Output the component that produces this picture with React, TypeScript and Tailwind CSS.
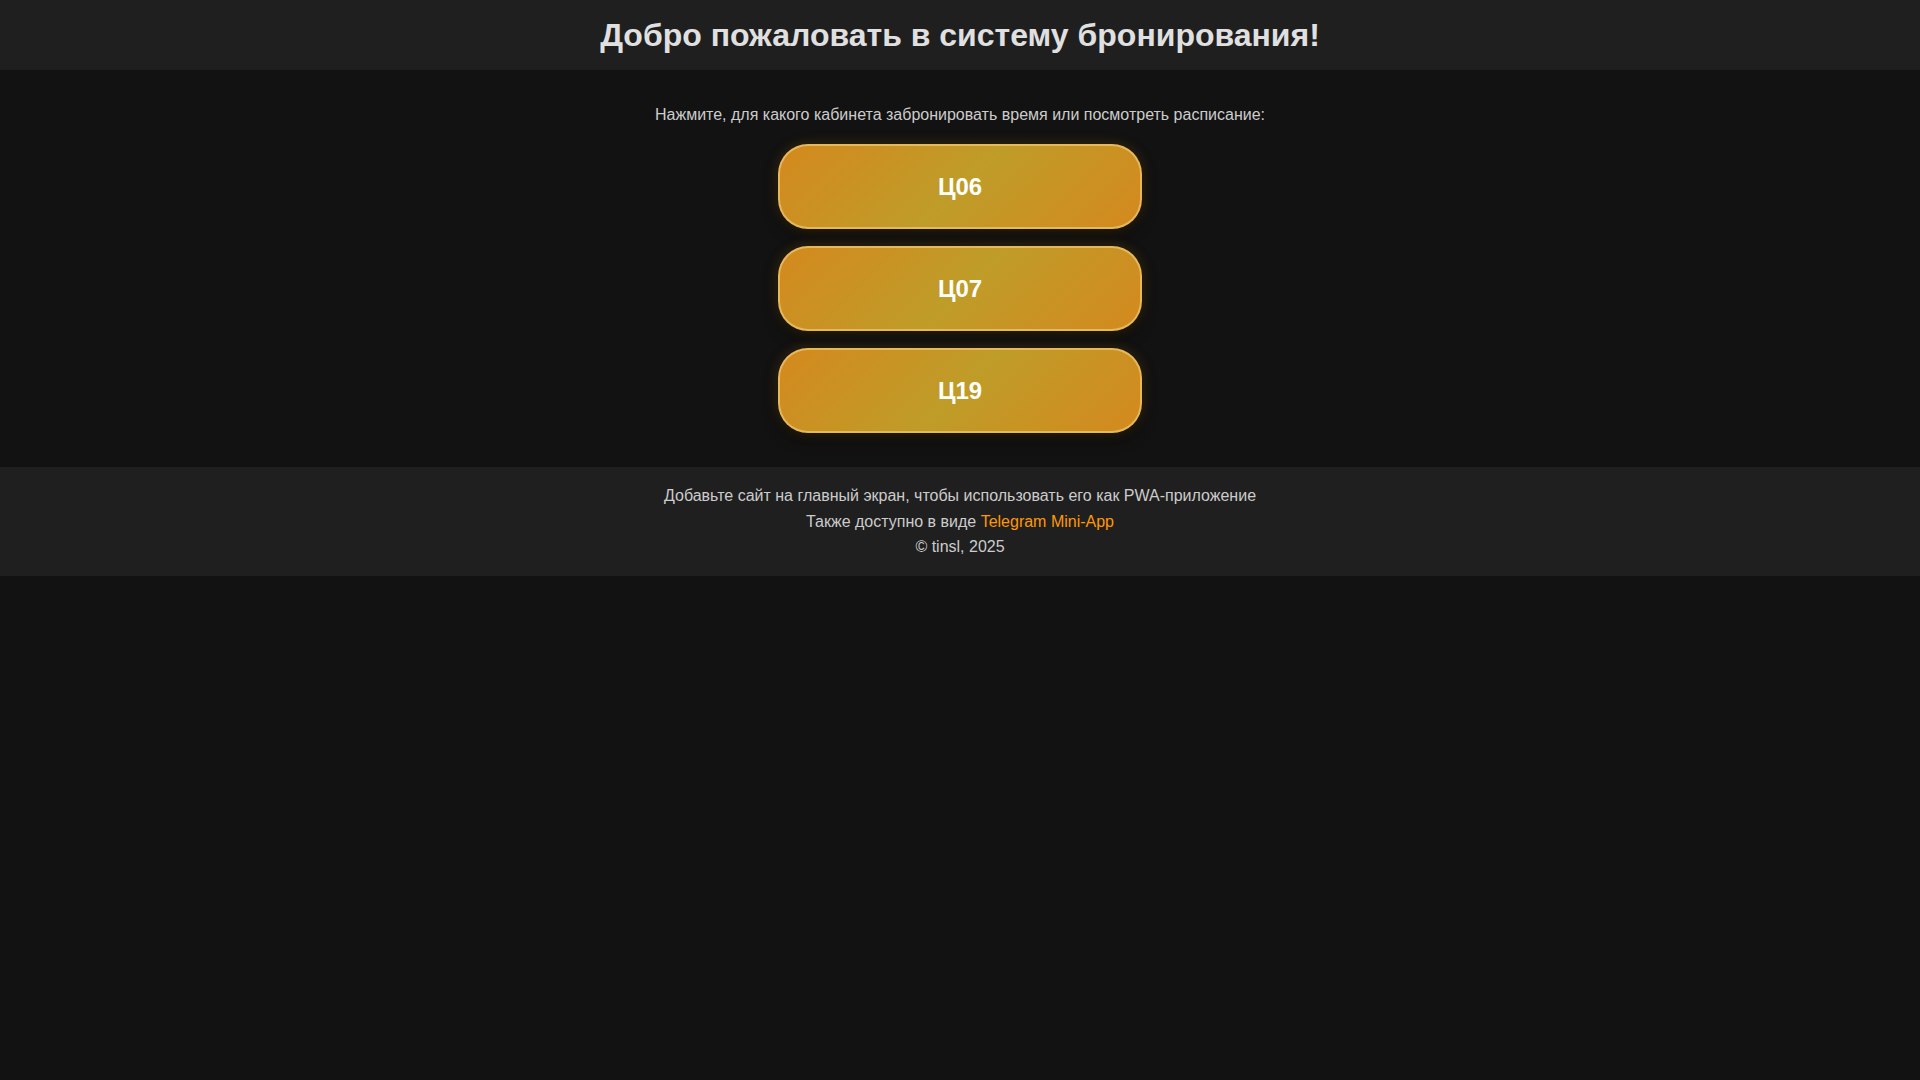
const rooms = ["Ц06", "Ц07", "Ц19"];

export default function App() {
  return (
    <div className="min-h-screen bg-[#121212] font-['Liberation_Sans',Arial,sans-serif] text-[#e0e0e0]">
      <header className="bg-[#1f1f1f] py-[15px] text-center">
        <h1 className="text-[32px] font-bold leading-[40px] text-[#e0e0e0]">
          Добро пожаловать в систему бронирования!
        </h1>
      </header>

      <main className="flex flex-col items-center pt-[32px] pb-[34px]">
        <p className="text-base leading-[26px] text-[#cccccc]">
          Нажмите, для какого кабинета забронировать время или посмотреть расписание:
        </p>
        <div className="mt-4 flex flex-col gap-[17px]">
          {rooms.map((room) => (
            <button
              key={room}
              className="flex h-[85px] w-[364px] items-center justify-center rounded-[30px] border-2 border-[#ecc26a]/80 bg-[linear-gradient(135deg,#d4891e_0%,#bf9c28_50%,#d4891e_100%)] text-2xl font-bold text-white shadow-[0_0_14px_rgba(255,165,0,0.18),0_6px_14px_rgba(0,0,0,0.5)]"
            >
              {room}
            </button>
          ))}
        </div>
      </main>

      <footer className="bg-[#1f1f1f] py-4 text-center text-base leading-[25.6px] text-[#cccccc]">
        <p>Добавьте сайт на главный экран, чтобы использовать его как PWA-приложение</p>
        <p>
          Также доступно в виде <a className="text-[#ff9800]">Telegram Mini-App</a>
        </p>
        <p>© tinsl, 2025</p>
      </footer>
    </div>
  );
}
